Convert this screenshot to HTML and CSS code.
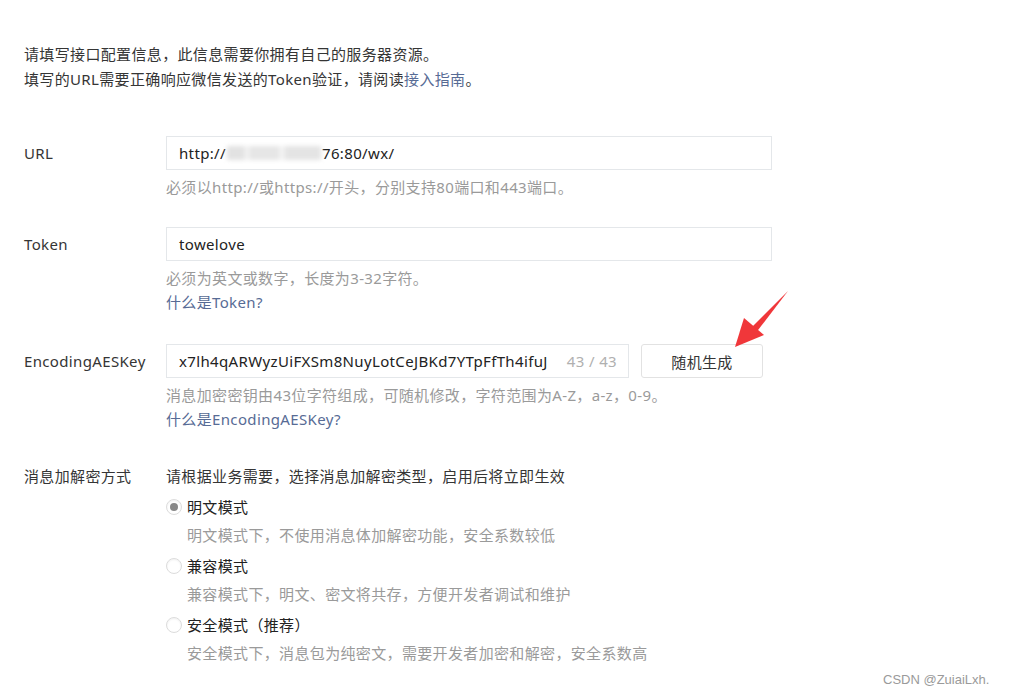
FILE: index.html
```html
<!DOCTYPE html>
<html lang="zh-CN">
<head>
<meta charset="utf-8">
<title>服务器配置</title>
<link rel="stylesheet" href="styles.css">
</head>
<body>
<div class="page">
  <div class="intro">
    <p>请填写接口配置信息，此信息需要你拥有自己的服务器资源。</p>
    <p>填写的URL需要正确响应微信发送的Token验证，请阅读<a class="link">接入指南</a>。</p>
  </div>

  <div class="row row-url">
    <div class="label">URL</div>
    <div class="field">
      <div class="input"><span>http://</span><span class="blur" aria-hidden="true"></span><span>76:80/wx/</span></div>
      <p class="hint">必须以http://或https://开头，分别支持80端口和443端口。</p>
    </div>
  </div>

  <div class="row row-token">
    <div class="label">Token</div>
    <div class="field">
      <div class="input"><span>towelove</span></div>
      <p class="hint">必须为英文或数字，长度为3-32字符。</p>
      <p class="hint"><a class="link">什么是Token?</a></p>
    </div>
  </div>

  <div class="row row-aes">
    <div class="label">EncodingAESKey</div>
    <div class="field">
      <div class="aes-line">
        <div class="input input-aes"><span>x7lh4qARWyzUiFXSm8NuyLotCeJBKd7YTpFfTh4ifuJ</span><span class="count">43 / 43</span></div>
        <button class="btn">随机生成</button>
      </div>
      <p class="hint">消息加密密钥由43位字符组成，可随机修改，字符范围为A-Z，a-z，0-9。</p>
      <p class="hint"><a class="link">什么是EncodingAESKey?</a></p>
    </div>
  </div>

  <div class="row row-mode">
    <div class="label label-text">消息加解密方式</div>
    <div class="field">
      <p class="mode-desc">请根据业务需要，选择消息加解密类型，启用后将立即生效</p>
      <label class="radio"><span class="dot checked"></span>明文模式</label>
      <p class="radio-desc">明文模式下，不使用消息体加解密功能，安全系数较低</p>
      <label class="radio"><span class="dot"></span>兼容模式</label>
      <p class="radio-desc">兼容模式下，明文、密文将共存，方便开发者调试和维护</p>
      <label class="radio"><span class="dot"></span>安全模式（推荐）</label>
      <p class="radio-desc">安全模式下，消息包为纯密文，需要开发者加密和解密，安全系数高</p>
    </div>
  </div>
</div>

<svg class="arrow" width="70" height="70" viewBox="0 0 70 70">
  <path d="M63 1 L25 39 L30 44 Z" fill="#f0373a"/>
  <path d="M10 57 L19 28 L39 45 Z" fill="#f0373a"/>
</svg>

<div class="watermark">CSDN @ZuiaiLxh.</div>
</body>
</html>
```

FILE: styles.css
```css
* { box-sizing: border-box; }
html, body { margin: 0; padding: 0; background: #fff; }
body {
  font-family: "Noto Sans", "Noto Sans CJK SC", sans-serif;
  font-size: 15px;
  letter-spacing: 0.35px;
  color: #353535;
  width: 1012px;
  height: 696px;
  overflow: hidden;
  position: relative;
}
p { margin: 0; }
.page { padding: 42px 0 0 24px; }
.intro p { line-height: 25px; }
.link { color: #576b95; text-decoration: none; }

.row { display: grid; grid-template-columns: 142px 606px; }
.row-url { margin-top: 44px; }
.row-token { margin-top: 28px; }
.row-aes { margin-top: 30px; }
.row-mode { margin-top: 33px; }

.label { line-height: 34px; }
.label-text { line-height: 24px; }

.input {
  height: 34px;
  border: 1px solid #e4e7ea;
  padding: 0 12px;
  display: flex;
  align-items: center;
  color: #222;
  white-space: nowrap;
  overflow: hidden;
}
.blur {
  display: inline-block;
  width: 94px;
  height: 14px;
  margin: 0 1px;
  background: linear-gradient(90deg, #e2e2e2 0 18%, #f0f0f0 18% 24%, #e6e6e6 24% 55%, #f2f2f2 55% 62%, #e4e4e4 62% 100%);
  filter: blur(2px);
}
.hint { color: #9a9a9a; line-height: 24px; }
.input + .hint, .aes-line + .hint { margin-top: 5px; }

.aes-line { display: flex; gap: 12px; }
.input-aes { width: 463px; justify-content: space-between; padding-right: 11px; }
.input-aes span:first-child { color: #222; overflow: hidden; }
.count { color: #b0b0b0; margin-left: 8px; }
.btn {
  width: 122px;
  height: 34px;
  border: 1px solid #e2e2e2;
  border-radius: 3px;
  background: #fff;
  font: inherit;
  letter-spacing: 0.35px;
  color: #353535;
  padding: 0;
}

.mode-desc { line-height: 24px; }
.radio {
  display: flex;
  align-items: center;
  line-height: 24px;
  margin-top: 7px;
  color: #222;
}
.dot {
  width: 16px;
  height: 16px;
  border-radius: 50%;
  border: 1px solid #dcdcdc;
  background: #fff;
  margin-right: 5px;
  position: relative;
  box-shadow: inset 0 1px 2px rgba(0,0,0,0.06);
}
.dot.checked::after {
  content: "";
  position: absolute;
  left: 3px; top: 3px;
  width: 8px; height: 8px;
  border-radius: 50%;
  background: #888;
}
.radio-desc {
  color: #9a9a9a;
  line-height: 24px;
  margin-top: 4px;
  padding-left: 21px;
}

.arrow { position: absolute; left: 725px; top: 290px; }
.watermark {
  position: absolute;
  left: 883px;
  top: 672px;
  font-family: "Liberation Sans", sans-serif;
  font-size: 13px;
  letter-spacing: 0;
  color: #9a9a9a;
}
```
